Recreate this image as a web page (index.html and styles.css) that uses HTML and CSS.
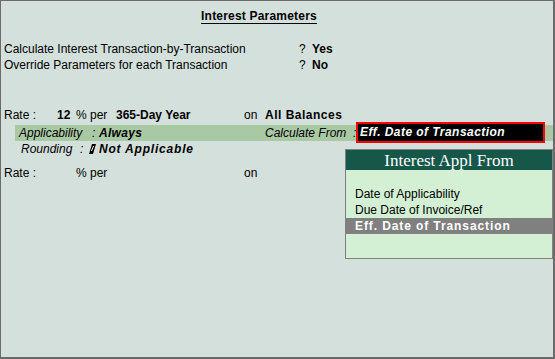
FILE: index.html
```html
<!DOCTYPE html>
<html lang="en">
<head>
  <meta charset="UTF-8" />
  <title>Interest Parameters</title>
  <link rel="stylesheet" href="styles.css">
</head>
<body>

  <div class="screen">
    <div class="title"><span>Interest Parameters</span></div>

    <!-- Yes/No options -->
    <div class="opts">
      <div class="row">
        <span class="opt-lbl">Calculate Interest Transaction-by-Transaction</span><span class="q">?</span><b>Yes</b>
      </div>
      <div class="row">
        <span class="opt-lbl">Override Parameters for each Transaction</span><span class="q">?</span><b>No</b>
      </div>
    </div>

    <!-- Rate details -->
    <div class="rates">
      <div class="row rate-row">
        <span class="c-rate">Rate :</span><b class="c-num">12</b><span class="c-per">% per</span><b class="c-year">365-Day Year</b><span class="c-on">on</span><b class="wide">All Balances</b>
      </div>
      <div class="band">
        <i class="a-lbl">Applicability</i><i class="a-colon">:</i><b class="a-val"><i>Always</i></b>
        <i class="cf-lbl">Calculate From</i><i class="cf-colon">:</i>
        <div class="cf-box">Eff. Date of Transaction</div>
      </div>
      <div class="row round-row">
        <i class="r-lbl">Rounding</i><i class="r-colon">:</i><span class="r-icon"><svg width="7" height="10" viewBox="0 0 7 10"><polygon points="3,0 7,0 4,10 0,10" fill="#000"/><line x1="4.6" y1="2" x2="2.4" y2="7" stroke="#fff" stroke-width="1"/></svg></span><b class="na"><i>Not Applicable</i></b>
      </div>
      <div class="row rate-row2">
        <span class="c-rate">Rate :</span><span class="c-num"></span><span class="c-per">% per</span><span class="c-year"></span><span class="c-on">on</span>
      </div>
    </div>

    <!-- List popup -->
    <div class="popup">
      <div class="popup-head">Interest Appl From</div>
      <div class="popup-body">
        <div class="item">Date of Applicability</div>
        <div class="item">Due Date of Invoice/Ref</div>
        <div class="item selected">Eff. Date of Transaction</div>
      </div>
    </div>
  </div>

</body>
</html>
```

FILE: styles.css
```css
/* General styling */
body {
  margin: 0;
  font-family: 'Liberation Sans', Arial, sans-serif;
  font-size: 12px;
  color: #000;
  background: #d4e0dc;
}

.screen {
  position: relative;
  width: 555px;
  height: 359px;
  box-sizing: border-box;
  background: #d4e0dc;
  border-top: 1px solid #6b6b6b;
  border-left: 1px solid #6b6b6b;
  border-right: 2px solid #6b6b6b;
  border-bottom: 2px solid #6b6b6b;
}

.row {
  height: 16px;
  line-height: 16px;
  white-space: nowrap;
}

.row > span,
.row > b,
.row > i {
  display: inline-block;
}

/* Title */
.title {
  padding-top: 7px;
  line-height: 16px;
  text-align: center;
  padding-right: 36px;
  font-weight: bold;
  letter-spacing: 0.2px;
}

.title span {
  text-decoration: underline;
  text-underline-offset: 3px;
}

/* Options */
.opts {
  margin-top: 17px;
  padding-left: 3px;
}

.opt-lbl {
  width: 295px;
}

.q {
  width: 13px;
}

/* Rates */
.rates {
  margin-top: 34px;
}

.rate-row,
.rate-row2 {
  padding-left: 3px;
}

.rate-row {
  margin-bottom: 2px;
}

.rate-row2 {
  margin-top: 8px;
}

.c-rate { width: 53px; }
.c-num { width: 19px; }
.c-per { width: 40px; }
.c-year { width: 128px; }
.c-on { width: 21px; }

.wide {
  letter-spacing: 0.5px;
}

.band {
  display: flex;
  align-items: center;
  height: 16px;
  line-height: 16px;
  margin-left: 14px;
  padding-left: 4px;
  background: #a9c9a5;
  white-space: nowrap;
}

.a-lbl { width: 73px; }
.a-colon { width: 7px; }
.a-val { width: 166px; letter-spacing: 0.3px; }
.cf-lbl { width: 88px; }
.cf-colon { width: 3px; }

.cf-box {
  width: 183px;
  height: 17px;
  margin: -3px 0 -2px;
  padding-left: 2px;
  background: #000;
  border: 2px solid #f00;
  color: #fff;
  font-weight: bold;
  font-style: italic;
  line-height: 17px;
  letter-spacing: 0.45px;
}

.round-row {
  padding-left: 20px;
}

.r-lbl { width: 59px; }
.r-colon { width: 9px; }

.r-icon {
  width: 10px;
  vertical-align: -1px;
}

.r-icon svg {
  display: block;
}

.na {
  letter-spacing: 0.8px;
}

/* Popup list */
.popup {
  position: absolute;
  left: 344px;
  top: 148px;
  width: 206px;
  border: 1px solid #808080;
  background: #d3f0d5;
}

.popup-head {
  height: 20px;
  line-height: 21px;
  background: #16574a;
  color: #fff;
  text-align: center;
  font-family: 'Liberation Serif', 'Times New Roman', serif;
  font-size: 17px;
}

.popup-body {
  padding: 16px 0 24px;
}

.item {
  height: 16px;
  line-height: 16px;
  padding-left: 9px;
}

.item.selected {
  background: #808080;
  color: #fff;
  font-weight: bold;
  letter-spacing: 0.9px;
}
```
